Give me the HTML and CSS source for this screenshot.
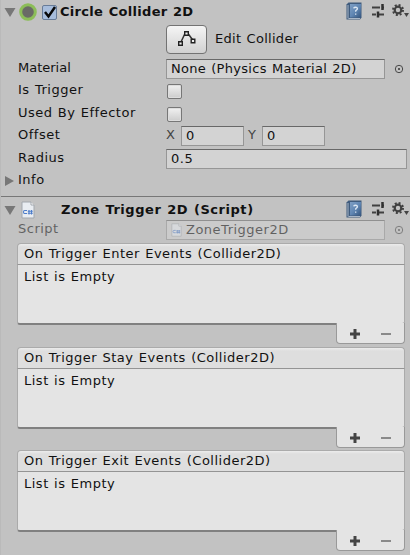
FILE: index.html
```
<!DOCTYPE html>
<html lang="en">
<head>
<meta charset="utf-8">
<title>Inspector</title>
<link rel="stylesheet" href="styles.css">
</head>
<body>
<svg width="0" height="0" class="defs">
  <defs>
    <linearGradient id="blue" x1="0" y1="0" x2="1" y2="1"><stop offset="0" stop-color="#7f9fc4"/><stop offset=".5" stop-color="#6187b4"/><stop offset="1" stop-color="#34557e"/></linearGradient>
    <symbol id="tools" viewBox="0 0 64 20">
      <path d="M1.500 2.500l2-2h13v15l-1.500 2H1.500z" fill="#3f5b7d"/>
      <path d="M5 2h11v13.500H5z" fill="url(#blue)"/>
      <path d="M3 3v13.500M3.500 16.500h11.500" stroke="#c5cfda" stroke-width=".8" fill="none"/>
      <path d="M8.500 6.200q2-2 4 0q.3 1.200-1.800 2.500v1M10.700 11.500v1.300" stroke="#dce7f3" stroke-width="1.300" fill="none"/>
      <path d="M27 5.500h8M37 5.500h2M27 12.500h4M34 12.500h5" stroke="#404040" stroke-width="2"/>
      <path d="M37.500 2v6M33 9.500v6" stroke="#303030" stroke-width="2.500"/>
      <circle cx="53" cy="8" r="3.300" fill="none" stroke="#404040" stroke-width="2.200"/>
      <circle cx="53" cy="8" r="5" fill="none" stroke="#404040" stroke-width="2" stroke-dasharray="2 1.927"/>
      <path d="M59 11h5l-2.500 4z" fill="#444"/>
    </symbol>
    <symbol id="script" viewBox="0 0 14 18">
      <path d="M1 1h9l3 3v13H1z" fill="#e9edf2" stroke="#a2a7ad"/>
      <path d="M10 1v3h3" fill="#fff" stroke="#a2a7ad"/>
      <path d="M6 9.500H3.500q-1 0-1 1.500t1 1.500H6M8 9v4.500M10.500 9v4.500M6.800 10.200h5M6.800 12.300h5" fill="none" stroke="#4d7dca" stroke-width="1.100"/>
    </symbol>
    <symbol id="target" viewBox="0 0 10 10"><circle cx="5" cy="5" r="3.700" fill="none" stroke="#484848"/><circle cx="5" cy="5" r="1" fill="#333"/></symbol>
  </defs>
</svg>
<main class="inspector">
  <section class="component collider">
    <header class="title">
      <svg class="fold" viewBox="0 0 12 12"><path d="M.5 2h11L6 11z"/></svg>
      <svg class="circle" viewBox="0 0 20 20"><circle cx="10" cy="10" r="7.300" fill="#6a6a66" stroke="#8cbd58" stroke-width="3"/></svg>
      <span class="check on"><svg viewBox="0 0 15 15"><path d="M3 7l3.500 4.500L13 2" fill="none" stroke="#080808" stroke-width="2.500"/></svg></span>
      <h2>Circle Collider 2D</h2>
      <svg class="tools"><use href="#tools"/></svg>
    </header>
    <div class="row edit"><button><svg width="20" height="18" viewBox="0 0 20 18"><path d="M3.500 13L8 3.500h3L16.500 11" fill="none" stroke="#333" stroke-width="1.500"/><path d="M1.700 11.700h3.600v3.600H1.700zM7.700 1.700h3.600v3.600H7.700zM14.200 9.200h3.600v3.600h-3.600z" fill="#eee" stroke="#222" stroke-width="1.400"/></svg></button><span class="caption">Edit Collider</span></div>
    <div class="row material"><label>Material</label><div class="field object"><span class="none">None (Physics Material 2D)</span></div><svg class="target"><use href="#target"/></svg></div>
    <div class="row trigger"><label>Is Trigger</label><span class="check"></span></div>
    <div class="row effector"><label>Used By Effector</label><span class="check"></span></div>
    <div class="row offset"><label>Offset</label><span class="axis">X</span><div class="field number">0</div><span class="axis y">Y</span><div class="field number">0</div></div>
    <div class="row radius"><label>Radius</label><div class="field wide">0.5</div></div>
    <div class="row info"><svg class="fold" viewBox="0 0 12 12"><path d="M1 1l9 5-9 5z"/></svg><span>Info</span></div>
  </section>
  <section class="component zone">
    <header class="title">
      <svg class="fold" viewBox="0 0 12 12"><path d="M.5 2h11L6 11z"/></svg>
      <svg class="script-icon"><use href="#script"/></svg>
      <h2>Zone Trigger 2D (Script)</h2>
      <svg class="tools"><use href="#tools"/></svg>
    </header>
    <div class="row script"><label>Script</label><div class="field object"><svg class="mini"><use href="#script"/></svg><span>ZoneTrigger2D</span></div><svg class="target"><use href="#target"/></svg></div>
    <div class="lists">
      <article class="list">
        <h3>On Trigger Enter Events (Collider2D)</h3><div class="empty">List is Empty</div>
        <div class="actions"><svg viewBox="0 0 69 20"><path d="M14 11h10M19 6v10" stroke="#444" stroke-width="3"/><path d="M45 11h10" stroke="#8a8a8a" stroke-width="2"/></svg></div>
      </article>
      <article class="list">
        <h3>On Trigger Stay Events (Collider2D)</h3><div class="empty">List is Empty</div>
        <div class="actions"><svg viewBox="0 0 69 20"><path d="M14 11h10M19 6v10" stroke="#444" stroke-width="3"/><path d="M45 11h10" stroke="#8a8a8a" stroke-width="2"/></svg></div>
      </article>
      <article class="list">
        <h3>On Trigger Exit Events (Collider2D)</h3><div class="empty">List is Empty</div>
        <div class="actions"><svg viewBox="0 0 69 20"><path d="M14 11h10M19 6v10" stroke="#444" stroke-width="3"/><path d="M45 11h10" stroke="#8a8a8a" stroke-width="2"/></svg></div>
      </article>
    </div>
  </section>
</main>
</body>
</html>
```
FILE: styles.css
```
* { box-sizing: border-box; }
body { margin: 0; background: #c2c2c2; color: #111; font: 13px/18px "DejaVu Sans", sans-serif; letter-spacing: .5px; word-spacing: .7px; overflow: hidden; }
.defs { position: absolute; }
.inspector { height: 555px; border-left: 1px solid #bababa; white-space: nowrap; }
.collider { height: 196px; }
.zone { border-top: 1px solid #777; }
.title { display: flex; height: 24px; align-items: center; padding-left: 3px; }
.title h2 { flex: 1; margin: 0 0 0 3px; font-size: 13px; line-height: 22px; letter-spacing: .3px; }
.fold { width: 12px; height: 12px; fill: #777; }
.circle { width: 20px; height: 20px; margin-left: 2px; }
.tools { width: 64px; height: 20px; margin-right: 1px; }
.check { flex: none; width: 15px; height: 15px; border: 1px solid #777; border-radius: 2px; background: linear-gradient(#f1f1f1, #ccc); box-shadow: inset 0 0 0 1px #ddd; }
.check.on { margin-left: 4px; background: #a7bddc; border-color: #687c98; box-shadow: none; }
.check svg { display: block; width: 15px; height: 15px; margin: -1px; }
.row { display: flex; align-items: center; height: 22px; }
.row label { width: 148px; margin-left: 17px; margin-top: -2px; flex: none; }
.edit { height: 33px; }
.edit button { width: 41px; height: 29px; margin: -2px 0 0 165px; padding: 2px 0 0; border: 1px solid #737373; border-radius: 4px; background: linear-gradient(#f5f5f5, #d1d1d1); }
.caption { margin-left: 8px; margin-top: -4px; letter-spacing: .3px; }
.field { height: 20px; padding: 0 4px; border: 1px solid #969696; border-top-color: #686868; background: #d3d3d3; line-height: 18px; }
.object { width: 219px; }
.none { letter-spacing: .3px; }
.target { width: 10px; height: 10px; margin-left: 9px; }
.material { height: 23px; padding-top: 1px; }
.material label { letter-spacing: 0; }
.effector { height: 23px; }
.trigger .check, .effector .check { margin-left: 1px; margin-top: 1px; }
.axis { width: 15px; margin-top: -2px; color: #444; }
.axis.y { width: 14px; margin-left: 4px; }
.number { width: 63px; }
.radius { height: 23px; }
.wide { width: 241px; }
.info .fold { margin-left: 3px; }
.info span { margin: -2px 0 0 2px; }
.zone .title { height: 23px; padding-top: 2px; }
.script-icon { width: 14px; height: 18px; margin-left: 5px; }
.zone .title h2 { margin-left: 26px; letter-spacing: .55px; }
.script { height: 20px; opacity: .55; }
.script .field { display: flex; align-items: center; }
.mini { width: 11px; height: 14px; margin-right: 4px; }
.lists { display: grid; grid-template-rows: 103.5px 103.5px 101px; margin: 3px 5px 0 16px; }
.list { display: grid; grid-template-rows: 22px 60px 19px; height: 101px; }
.list h3 { margin: 0; padding-left: 6px; font-size: 13px; font-weight: normal; line-height: 20px; border: 1px solid #ababab; border-bottom-color: #949494; border-radius: 4px 4px 0 0; background: linear-gradient(#ececec, #dedede 3px); }
.empty { padding: 3px 6px; border: solid #aaa; border-width: 0 1px 2px; border-bottom-color: #808080; border-radius: 0 0 3px 3px; background: #e4e4e4; }
.actions { width: 69px; height: 21px; margin: -2px 0 0; justify-self: end; background: #e4e4e4; border: 1px solid #999; border-top: 0; border-radius: 0 0 4px 4px; z-index: 1; }
.actions svg { display: block; width: 69px; height: 20px; margin-left: -1px; }
```
